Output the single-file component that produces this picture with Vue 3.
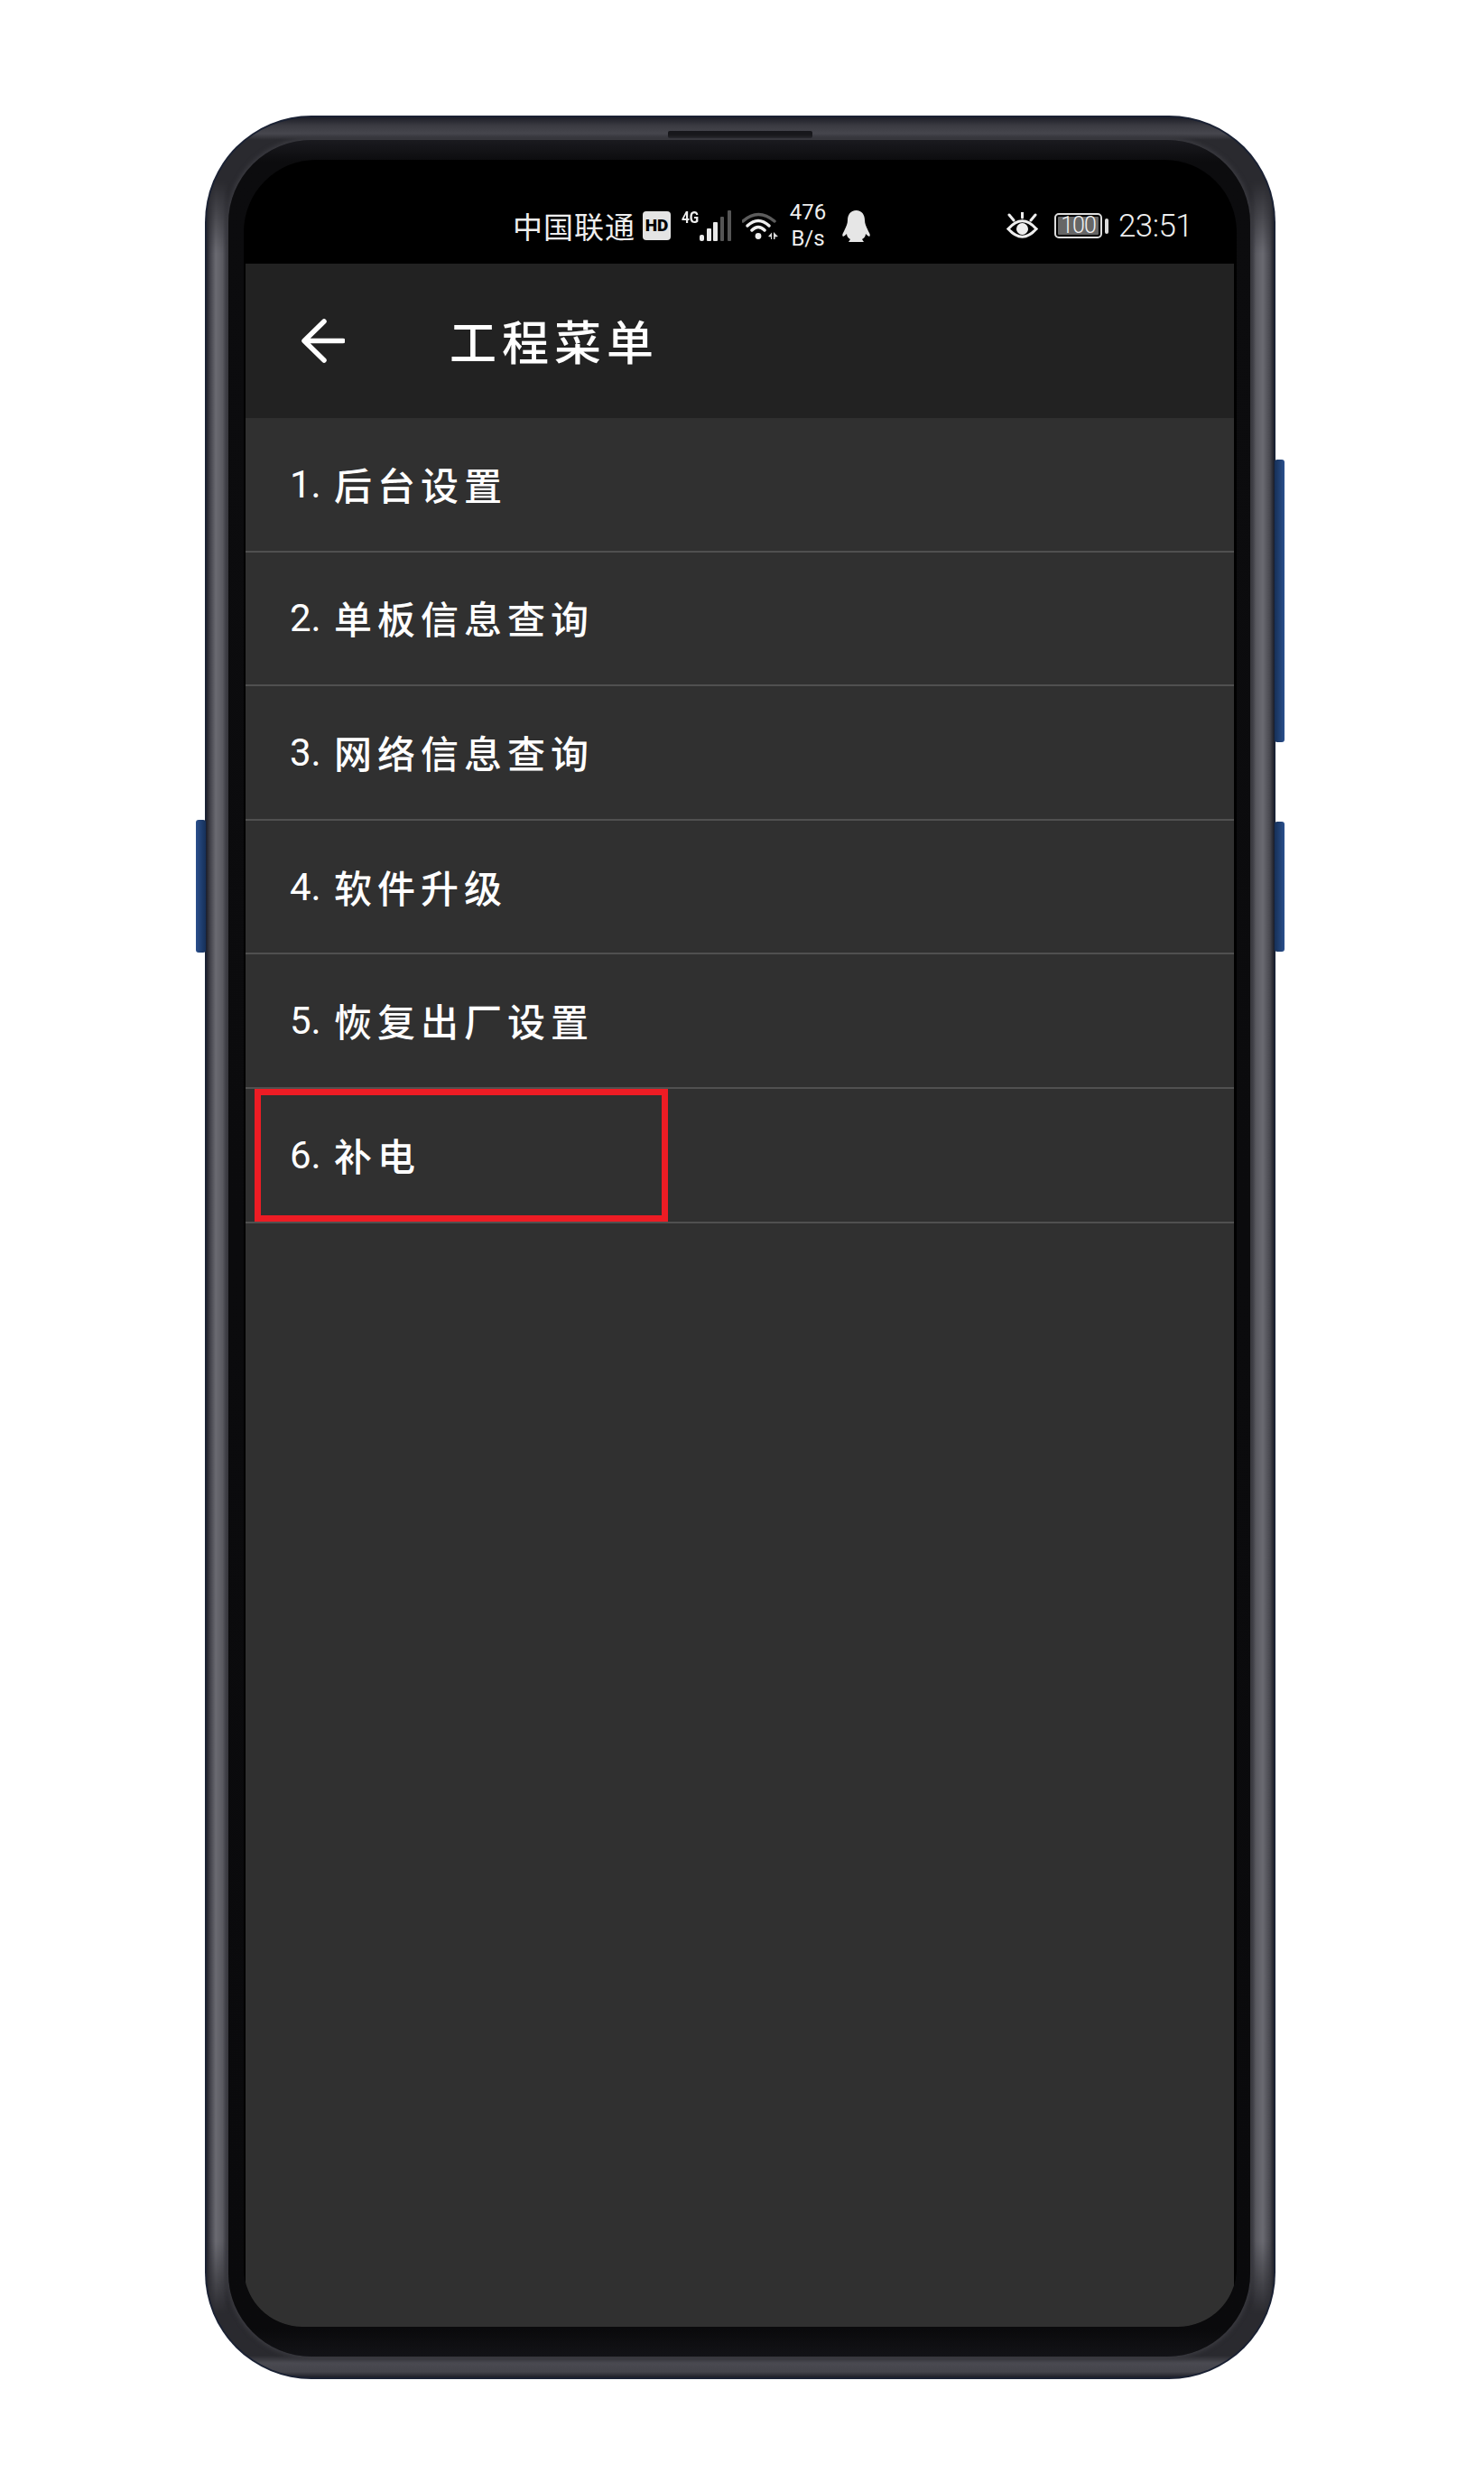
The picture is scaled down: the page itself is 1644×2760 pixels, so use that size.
<script setup>
const rows = [
  { n: '1.', label: '后台设置' },
  { n: '2.', label: '单板信息查询' },
  { n: '3.', label: '网络信息查询' },
  { n: '4.', label: '软件升级' },
  { n: '5.', label: '恢复出厂设置' },
  { n: '6.', label: '补电', marked: true },
]
</script>

<template>
  <div class="page">
    <div class="phone">
      <span class="key key-left"></span>
      <span class="key key-right-a"></span>
      <span class="key key-right-b"></span>
      <div class="rim">
        <span class="earpiece"></span>
        <div class="bezel">
          <div class="display">
            <div class="status">
              <span class="carrier">中国联通</span>
              <span class="hd">HD</span>
              <div class="net">
                <span class="g4">4G</span>
                <svg class="bars" width="36" height="34" viewBox="0 0 36 34">
                  <rect x="0" y="27" width="5" height="7" rx="2" fill="#e8e8e8" />
                  <rect x="8" y="20" width="5" height="14" rx="1" fill="#e8e8e8" />
                  <rect x="15" y="13" width="5" height="21" rx="1" fill="#e8e8e8" />
                  <rect x="23" y="7" width="4" height="27" rx="1" fill="#555" />
                  <rect x="31" y="0" width="4" height="34" rx="1" fill="#555" />
                </svg>
              </div>
              <svg class="wifi" width="40" height="30" viewBox="0 0 40 30">
                <path d="M1 10 Q18 -5 36 10" fill="none" stroke="#5c5c5c" stroke-width="3.5" stroke-linecap="round" />
                <path d="M6 15 Q18 4 30 15" fill="none" stroke="#eee" stroke-width="3.5" stroke-linecap="round" />
                <path d="M11 20 Q18 13 25 20" fill="none" stroke="#eee" stroke-width="3.5" stroke-linecap="round" />
                <circle cx="18" cy="26.5" r="3.4" fill="#eee" />
                <path d="M29 27 L33 22.5 V30 H32 V27.5 Z M35 22 L40 27 L36.5 27.5 V30 H35 Z" fill="#ddd" />
              </svg>
              <div class="speed"><span>476</span><span>B/s</span></div>
              <svg class="penguin" width="31" height="35" viewBox="0 0 31 35">
                <path d="M15.5 0 C22 0 25 5 25 11 C25 15 27 19 30 25 C31 27 31 28 30 29 C28 28 27 27 26 26 C26 29 24 31 22 32 L24 35 H7 L9 32 C7 31 5 29 5 26 C4 27 3 28 1 29 C0 28 0 27 1 25 C4 19 6 15 6 11 C6 5 9 0 15.5 0 Z" fill="#e6e6e6" />
              </svg>
              <svg class="eye" width="35" height="30" viewBox="0 0 35 30">
                <path d="M17.5 0 V6 M3 3 L8 9 M32 3 L27 9" stroke="#eee" stroke-width="3" stroke-linecap="round" fill="none" />
                <path d="M2 18.5 Q17.5 1 33 18.5 Q17.5 36 2 18.5 Z" stroke="#eee" stroke-width="3.2" fill="none" />
                <circle cx="17.5" cy="18.5" r="6.5" fill="#eee" />
              </svg>
              <div class="battery"><span class="level">100</span></div>
              <span class="nub"></span>
              <span class="time">23:51</span>
            </div>
            <div class="appbar">
              <svg class="back" width="48" height="49" viewBox="0 0 48 49">
                <path d="M46 24.5 H4 M25 3 L3 24.5 L25 46" fill="none" stroke="#fff" stroke-width="5.5" stroke-linecap="round" stroke-linejoin="round" />
              </svg>
              <h1 class="title">工程菜单</h1>
            </div>
            <div class="list">
              <div v-for="row in rows" :key="row.n" class="row">
                <span class="num">{{ row.n }}</span>
                <span class="label">{{ row.label }}</span>
                <span v-if="row.marked" class="mark"></span>
              </div>
            </div>
          </div>
        </div>
      </div>
    </div>
  </div>
</template>

<style scoped>
.page {
  width: 1644px;
  height: 2760px;
  background: #fff;
  padding: 128px 0 0 227px;
  box-sizing: border-box;
  font-family: Roboto, "Noto Sans CJK SC", sans-serif;
}
.phone {
  position: relative;
  width: 1186px;
  height: 2507px;
  box-sizing: border-box;
  padding: 2px;
  border-radius: 118px;
  background: #1a2133;
}
.key {
  position: absolute;
  width: 11px;
  background: linear-gradient(90deg, #163058, #2a4f8c);
  border-radius: 3px;
  z-index: 0;
}
.key-left {
  left: -10px;
  top: 780px;
  height: 147px;
  background: linear-gradient(90deg, #2a4f8c, #163058);
}
.key-right-a {
  right: -10px;
  top: 381px;
  height: 313px;
}
.key-right-b {
  right: -10px;
  top: 782px;
  height: 144px;
}
.rim {
  position: relative;
  z-index: 1;
  height: 100%;
  box-sizing: border-box;
  padding: 25px 26px 23px 24px;
  border-radius: 116px;
  background: linear-gradient(180deg, #1e1f28 0, #3a3a41 9px, #47474e 18px, #2a2a2f 25px, #2a2a2f calc(100% - 24px), #4a4a51 calc(100% - 16px), #44444b calc(100% - 6px), #1e1f28 100%);
  overflow: hidden;
}
.rim::before {
  content: "";
  position: absolute;
  inset: 0;
  background: linear-gradient(90deg, #22232c 0, #3c3c44 3px, #6a6a71 10px, #5a5a61 18px, #303036 24px, transparent 25px, transparent calc(100% - 27px), #303036 calc(100% - 26px), #5a5a61 calc(100% - 20px), #6a6a71 calc(100% - 12px), #47474e calc(100% - 4px), #22232c 100%);
  -webkit-mask-image: linear-gradient(180deg, transparent 70px, #000 150px, #000 calc(100% - 150px), transparent calc(100% - 70px));
  mask-image: linear-gradient(180deg, transparent 70px, #000 150px, #000 calc(100% - 150px), transparent calc(100% - 70px));
}
.earpiece {
  position: absolute;
  left: 511px;
  top: 15px;
  width: 160px;
  height: 8px;
  border-radius: 2px;
  background: #17171b;
}
.bezel {
  position: relative;
  height: 100%;
  box-sizing: border-box;
  padding: 22px 15px 33px 17px;
  border-radius: 92px;
  background: linear-gradient(180deg, #1a1a1f 0, #0c0c0e 24px, #0a0a0c calc(100% - 30px), #131317 100%);
  box-shadow: 0 0 5px 2px #3c3c42;
}
.display {
  height: 100%;
  display: flex;
  flex-direction: column;
  box-sizing: border-box;
  padding: 0 3px 0 2px;
  border-radius: 80px 80px 65px 65px;
  background: #000;
  overflow: hidden;
}
.status {
  height: 115px;
  flex: none;
  box-sizing: border-box;
  padding: 31px 50px 0 296px;
  display: flex;
  align-items: center;
  color: #eee;
}
.carrier {
  width: 135px;
  font-family: "Noto Sans CJK SC", sans-serif;
  font-size: 33px;
  letter-spacing: 1px;
  white-space: nowrap;
}
.hd {
  width: 31px;
  height: 32px;
  margin-left: 9px;
  border-radius: 4px;
  background: #e4e4e4;
  color: #000;
  font-size: 19px;
  font-weight: 900;
  line-height: 32px;
  text-align: center;
}
.net {
  width: 56px;
  height: 34px;
  margin-left: 12px;
  display: flex;
  align-items: flex-start;
  justify-content: space-between;
}
.g4 {
  width: 18px;
  font-size: 18px;
  font-weight: 700;
  line-height: 15px;
  transform: scaleX(0.85);
  transform-origin: left;
}
.bars {
  flex: none;
}
.wifi {
  margin-left: 11px;
  flex: none;
}
.speed {
  width: 40px;
  margin-left: 13px;
  display: flex;
  flex-direction: column;
  align-items: center;
  font-size: 24px;
  font-weight: 400;
  line-height: 29px;
}
.penguin {
  margin-left: 18px;
  flex: none;
}
.eye {
  margin-left: auto;
  flex: none;
}
.battery {
  width: 53px;
  height: 28px;
  margin-left: 18px;
  box-sizing: border-box;
  padding: 2px;
  border: 2px solid #ddd;
  border-radius: 5px;
  display: flex;
}
.level {
  flex: 1;
  background: #666;
  border-radius: 1px;
  color: #f0f0f0;
  font-size: 25px;
  font-weight: 300;
  line-height: 20px;
  text-align: center;
  letter-spacing: -1px;
}
.nub {
  width: 4px;
  height: 17px;
  margin-left: 3px;
  border-radius: 2px;
  background: #ddd;
}
.time {
  margin-left: 11px;
  width: 78px;
  font-size: 35px;
  font-weight: 300;
  letter-spacing: -0.6px;
  white-space: nowrap;
}
.appbar {
  height: 171px;
  flex: none;
  box-sizing: border-box;
  padding: 0 0 2px 62px;
  display: flex;
  align-items: center;
  background: #222;
}
.back {
  flex: none;
  margin-top: 2px;
}
.title {
  margin: 0 0 0 116px;
  font-family: "Noto Sans CJK SC", sans-serif;
  font-size: 52px;
  font-weight: 500;
  letter-spacing: 6px;
  color: #fff;
}
.list {
  flex: 1;
  background: #303030;
}
.row {
  position: relative;
  height: 148.6px;
  box-sizing: border-box;
  padding-left: 49px;
  border-bottom: 2px solid #505050;
  display: flex;
  align-items: center;
  color: #fff;
  font-size: 42px;
}
.num {
  width: 49px;
  font-weight: 400;
  flex: none;
}
.label {
  font-family: "Noto Sans CJK SC", sans-serif;
  font-weight: 500;
  letter-spacing: 6px;
  margin-top: -2px;
}
.mark {
  position: absolute;
  left: 10px;
  top: 0;
  width: 458px;
  height: 147px;
  box-sizing: border-box;
  border: 7px solid #ed1c24;
}
</style>

<style>
html, body {
  margin: 0;
  background: #fff;
}
</style>
